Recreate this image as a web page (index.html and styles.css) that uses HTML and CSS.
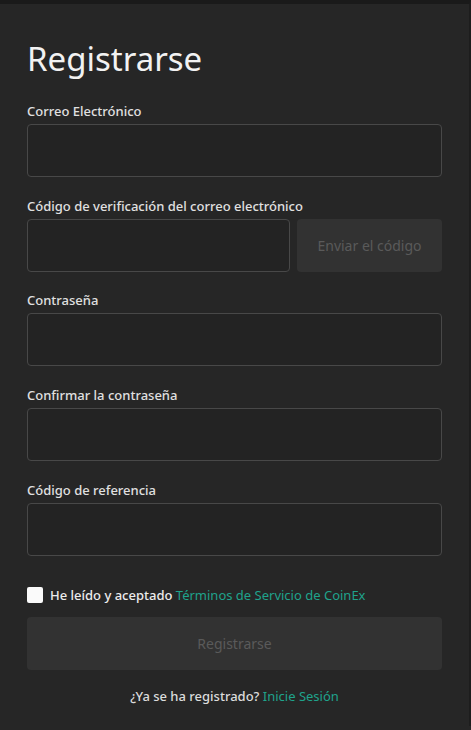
FILE: index.html
```html
<!DOCTYPE html>
<html lang="es">
<head>
  <meta charset="UTF-8">
  <title>Registrarse</title>
  <link rel="stylesheet" href="styles.css">
</head>
<body>

<div class="page">
  <h1>Registrarse</h1>

  <form class="form">
    <div class="field">
      <label>Correo Electrónico</label>
      <input type="text" class="input">
    </div>

    <div class="field">
      <label>Código de verificación del correo electrónico</label>
      <div class="code-row">
        <input type="text" class="input">
        <button type="button" class="btn-code">Enviar el código</button>
      </div>
    </div>

    <div class="field">
      <label>Contraseña</label>
      <input type="password" class="input">
    </div>

    <div class="field">
      <label>Confirmar la contraseña</label>
      <input type="password" class="input">
    </div>

    <div class="field">
      <label>Código de referencia</label>
      <input type="text" class="input">
    </div>

    <div class="terms">
      <span class="checkbox"></span>
      <span>He leído y aceptado <a href="#" class="link">Términos de Servicio de CoinEx</a></span>
    </div>

    <button type="button" class="btn-submit">Registrarse</button>

    <p class="login">¿Ya se ha registrado? <a href="#" class="link">Inicie Sesión</a></p>
  </form>
</div>

</body>
</html>
```

FILE: styles.css
```css
body {
  margin: 0;
  background: #262626;
  color: #e6e6e6;
  font-family: 'Noto Sans', 'Open Sans', sans-serif;
}

.page {
  min-height: 726px;
  border-top: 4px solid #1a1a1a;
  border-right: 2px solid #1d1d1d;
  padding: 0 27px 0 27px;
  box-sizing: border-box;
}

h1 {
  margin: 0;
  padding-top: 33px;
  font-size: 33px;
  font-weight: 400;
  line-height: 44px;
  color: #f2f2f2;
}

.form {
  margin-top: 21px;
  width: 415px;
}

.field {
  display: flex;
  flex-direction: column;
  gap: 3px;
  margin-bottom: 20px;
}

.field:nth-child(2) {
  margin-bottom: 19px;
}

.field label {
  font-size: 13px;
  line-height: 19px;
  font-weight: 500;
  color: #e0e0e0;
}

.input {
  height: 53px;
  box-sizing: border-box;
  border: 1px solid #484848;
  border-radius: 4px;
  background: #232323;
  color: #fff;
  font: inherit;
  padding: 0 12px;
  width: 100%;
}

.code-row {
  display: flex;
  gap: 7px;
}

.code-row .input {
  width: 263px;
  flex: none;
}

.btn-code {
  flex: 1;
  height: 53px;
  border: none;
  border-radius: 4px;
  background: #323232;
  color: #5a5a5a;
  font-family: inherit;
  font-size: 14px;
}

.terms {
  display: flex;
  align-items: center;
  gap: 7px;
  margin-top: 30px;
  font-size: 13px;
  font-weight: 500;
  color: #ececec;
}

.checkbox {
  width: 16px;
  height: 16px;
  background: #fafafa;
  border-radius: 2px;
}

.link {
  color: #1fa38c;
  font-weight: 400;
  text-decoration: none;
}

.btn-submit {
  display: block;
  width: 100%;
  height: 53px;
  margin-top: 13px;
  border: none;
  border-radius: 4px;
  background: #323232;
  color: #5a5a5a;
  font-family: inherit;
  font-size: 14px;
}

.login {
  margin: 17px 0 0;
  text-align: center;
  font-size: 13px;
  font-weight: 500;
  color: #dcdcdc;
}
```
